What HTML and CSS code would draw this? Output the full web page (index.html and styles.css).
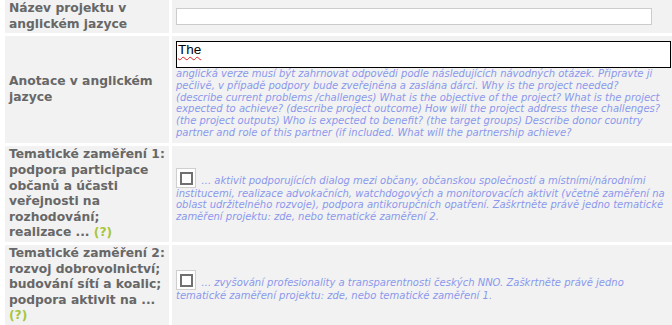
FILE: index.html
```html
<!DOCTYPE html>
<html lang="cs">
<head>
<meta charset="utf-8">
<title>Formulář</title>
<link rel="stylesheet" href="styles.css">
</head>
<body>
<div class="form">
  <div class="label"><span class="label-text">Název projektu v anglickém jazyce</span></div>
  <div class="value"><div class="input"></div></div>

  <div class="label"><span class="label-text">Anotace v anglickém jazyce</span></div>
  <div class="value top">
    <div class="textarea"><span class="spell">The</span></div>
    <div class="hint">anglická verze musí být zahrnovat odpovědi podle následujících návodných otázek. Připravte ji<br>pečlivě, v případě podpory bude zveřejněna a zaslána dárci. Why is the project needed?<br>(describe current problems /challenges) What is the objective of the project? What is the project<br>expected to achieve? (describe project outcome) How will the project address these challenges?<br>(the project outputs) Who is expected to benefit? (the target groups) Describe donor country<br>partner and role of this partner (if included. What will the partnership achieve?</div>
  </div>

  <div class="label"><span class="label-text">Tematické zaměření 1: podpora participace občanů a účasti veřejnosti na rozhodování;<br>realizace ... <span class="help">(?)</span></span></div>
  <div class="value">
    <div class="hint"><span class="cb"><span class="cb-in"></span></span> … aktivit podporujících dialog mezi občany, občanskou společností a místními/národními institucemi, realizace advokačních, watchdogových a monitorovacích aktivit (včetně zaměření na oblast udržitelného rozvoje), podpora antikorupčních opatření. Zaškrtněte právě jedno tematické zaměření projektu: zde, nebo tematické zaměření 2.</div>
  </div>

  <div class="label"><span class="label-text">Tematické zaměření 2: rozvoj dobrovolnictví; budování sítí a koalic; podpora aktivit na ... <span class="help">(?)</span></span></div>
  <div class="value">
    <div class="hint"><span class="cb"><span class="cb-in"></span></span> … zvyšování profesionality a transparentnosti českých NNO. Zaškrtněte právě jedno tematické zaměření projektu: zde, nebo tematické zaměření 1.</div>
  </div>
</div>
</body>
</html>
```
FILE: styles.css
```css
html, body {
  margin: 0;
  padding: 0;
  background: #ffffff;
}
body {
  font-family: "DejaVu Sans", Verdana, sans-serif;
  overflow: hidden;
}
.form {
  display: grid;
  grid-template-columns: 164px 1fr;
  column-gap: 3px;
  row-gap: 3px;
  padding-left: 5px;
}
.label {
  background: #f2f2f2;
  color: #676767;
  font-weight: bold;
  font-size: 12.3px;
  line-height: 15.6px;
  padding: 1px 0 1px 4px;
  display: flex;
  align-items: center;
}
.help {
  color: #a6c63c;
}
.value {
  background: #f2f2f2;
  padding: 0 5.5px 0 4px;
  display: flex;
  flex-direction: column;
  justify-content: center;
}
.value.top {
  justify-content: flex-start;
  padding: 5px 2px 5px 4px;
}
.input {
  width: 474px;
  height: 15px;
  border: 1px solid #cccccc;
  background: #ffffff;
}
.textarea {
  width: 491px;
  height: 25px;
  flex: none;
  border: 1px solid #000000;
  background: #ffffff;
  font-family: "Liberation Sans", Arial, sans-serif;
  font-size: 13.5px;
  line-height: 16px;
  padding: 0 1px;
}
.spell {
  text-decoration: underline wavy #e02020;
  text-decoration-thickness: 1px;
  text-underline-offset: 2px;
}
.hint {
  font-size: 10px;
  font-style: italic;
  line-height: 11.7px;
  color: #8a98ec;
}
.cb {
  display: inline-block;
  width: 18px;
  height: 18px;
  border: 1px solid #cfcfcf;
  background: #ffffff;
  vertical-align: -4px;
  position: relative;
  margin: 2px 2px 0 0;
}
.cb-in {
  position: absolute;
  left: 3px;
  top: 3px;
  width: 9px;
  height: 9px;
  border: 2px solid #707070;
}
```
